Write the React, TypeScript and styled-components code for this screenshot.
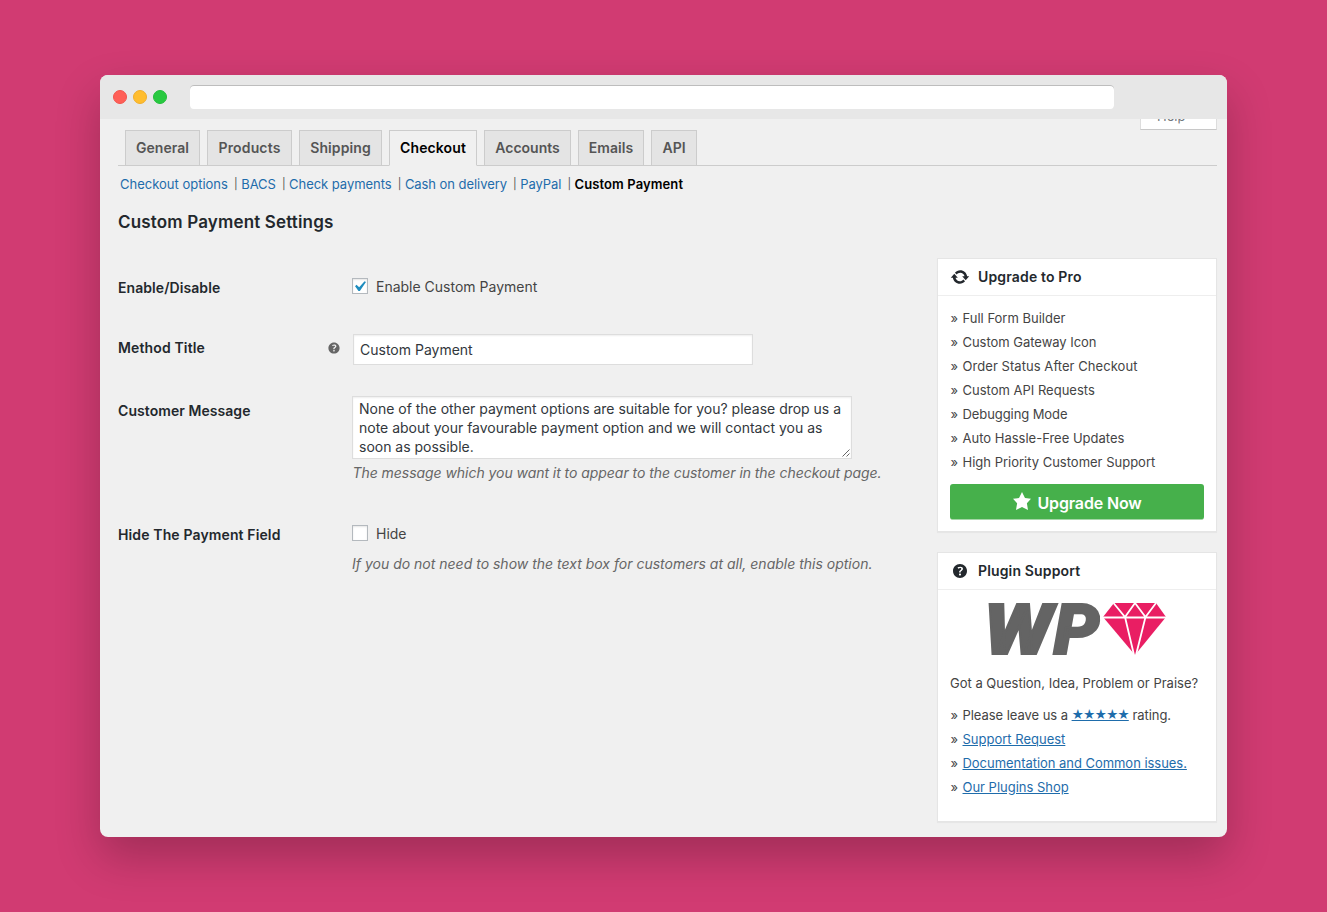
import React from "react";
import styled, { createGlobalStyle } from "styled-components";

const GlobalStyle = createGlobalStyle`
  * { box-sizing: border-box; }
  body {
    margin: 0;
    background: #d13b72;
    color: #444;
    font-family: Inter, "Open Sans", "Liberation Sans", sans-serif;
    font-size: 13px;
  }
  h2, h3, p, ul { margin: 0; padding: 0; font-weight: 400; }
`;

const Stage = styled.div`
  height: 912px;
  padding: 75px 100px;
  overflow: hidden;
`;

const Window = styled.div`
  width: 1127px;
  height: 762px;
  border-radius: 8px;
  background: #f0f0f0;
  overflow: hidden;
  box-shadow: 0 20px 45px rgba(0, 0, 0, 0.23);
`;

const TitleBar = styled.div`
  display: flex;
  align-items: center;
  height: 44px;
  padding-left: 13px;
  background: #e7e7e7;
`;

const Dot = styled.span<{ $fill: string; $ring: string }>`
  width: 14px;
  height: 14px;
  margin-right: 6px;
  border-radius: 50%;
  background: ${(p) => p.$fill};
  border: 1px solid ${(p) => p.$ring};
`;

const AddressBar = styled.div`
  width: 924px;
  height: 24px;
  margin-left: 17px;
  border-radius: 4px;
  background: #fff;
  box-shadow: inset 0 1px 0 #bdbdbd;
`;

const Page = styled.div`
  height: 718px;
  padding: 0 10px 0 18px;
  overflow: hidden;
`;

const ScreenMeta = styled.div`
  display: flex;
  justify-content: flex-end;
  align-items: flex-end;
  height: 11px;
  overflow: hidden;
`;

const HelpButton = styled.div`
  flex: none;
  width: 77px;
  height: 28px;
  padding: 2px 0 0 16px;
  line-height: 22px;
  color: #72777c;
  background: #fff;
  border: 1px solid #ddd;
  border-bottom-color: #c8c8c8;
`;

const Tabs = styled.nav`
  display: flex;
  gap: 7px;
  height: 36px;
  padding-left: 7px;
  box-shadow: inset 0 -1px 0 #ccc;
`;

const Tab = styled.a<{ $width: number; $active?: boolean; $spacing?: number }>`
  width: ${(p) => p.$width}px;
  border: 1px solid #ccc;
  border-bottom-color: ${(p) => (p.$active ? "#f0f0f0" : "#ccc")};
  background: ${(p) => (p.$active ? "#f0f0f0" : "#e4e4e4")};
  color: ${(p) => (p.$active ? "#000" : "#555")};
  font-size: 14px;
  font-weight: 600;
  line-height: 34px;
  letter-spacing: ${(p) => p.$spacing ?? 0}px;
  text-align: center;
  white-space: nowrap;
`;

const SubNav = styled.nav`
  display: flex;
  padding: 7px 0 1px 2px;
  line-height: 22px;
  white-space: nowrap;
`;

const SubLink = styled.a<{ $current?: boolean; $spacing?: number }>`
  color: ${(p) => (p.$current ? "#000" : "#1e6cab")};
  font-weight: ${(p) => (p.$current ? 600 : 400)};
  letter-spacing: ${(p) => p.$spacing ?? 0}px;
`;

const Divider = styled.span`
  width: 4px;
  margin: 0 3.3px 0 6px;
  display: flex;
  justify-content: center;
  color: #555;
  font-size: 11px;
`;

const PageTitle = styled.h2`
  height: 62px;
  padding-top: 14px;
  color: #23282d;
  font-size: 17px;
  font-weight: 600;
  line-height: 24px;
  letter-spacing: 0.16px;
`;

const Columns = styled.div`
  display: flex;
  justify-content: space-between;
  align-items: flex-start;
`;

const FormRow = styled.div<{ $height: number }>`
  display: grid;
  grid-template-columns: 210px 24px 560px;
  height: ${(p) => p.$height}px;
`;

const Label = styled.label<{ $spacing: number }>`
  padding-top: 20px;
  color: #23282d;
  font-size: 14px;
  font-weight: 600;
  line-height: 20px;
  letter-spacing: ${(p) => p.$spacing}px;
  white-space: nowrap;
`;

const Tip = styled.span`
  padding-top: 21.5px;
  svg { display: block; margin-left: -2px; fill: #666; }
`;

const Field = styled.div<{ $top: number }>`
  padding-top: ${(p) => p.$top}px;
`;

const CheckLine = styled.label`
  display: flex;
  align-items: center;
  gap: 8px;
  height: 18px;
  font-size: 14px;
  line-height: 18px;
`;

const Checkbox = styled.span`
  width: 16px;
  height: 16px;
  margin-top: -2px;
  background: #fff;
  border: 1px solid #b4b9be;
  box-shadow: inset 0 1px 2px rgba(0, 0, 0, 0.1);
  svg { display: block; margin: -3px 0 0 -4px; fill: #1e8cbe; }
`;

const TextInput = styled.div`
  width: 400px;
  height: 31px;
  margin-left: 1px;
  padding-left: 6px;
  background: #fff;
  border: 1px solid #ddd;
  box-shadow: inset 0 1px 2px rgba(0, 0, 0, 0.07);
  color: #32373c;
  font-size: 14px;
  line-height: 30px;
`;

const TextArea = styled.div`
  display: flex;
  width: 500px;
  height: 63px;
  padding: 2px 1px 1px 6px;
  background: #fff;
  border: 1px solid #ddd;
  box-shadow: inset 0 1px 2px rgba(0, 0, 0, 0.07);
  color: #32373c;
  font-size: 14px;
  line-height: 19px;
  white-space: pre;
  svg { flex: none; align-self: flex-end; margin-left: -9px; }
`;

const Message = styled.div`
  flex: 1;
  letter-spacing: -0.01px;
`;

const Description = styled.p<{ $top: number; $left?: number; $spacing?: number }>`
  padding: ${(p) => p.$top}px 0 0 ${(p) => p.$left ?? 0}px;
  color: #666;
  font-size: 14px;
  font-style: italic;
  line-height: 20px;
  letter-spacing: ${(p) => p.$spacing ?? 0}px;
  white-space: nowrap;
`;

const Sidebar = styled.aside`
  display: grid;
  gap: 20px;
  width: 280px;
`;

const Card = styled.section<{ $height: number }>`
  height: ${(p) => p.$height}px;
  background: #fff;
  border: 1px solid #e5e5e5;
  box-shadow: 0 1px 1px rgba(0, 0, 0, 0.04);
`;

const CardHeader = styled.h3`
  display: flex;
  align-items: flex-start;
  gap: 8px;
  height: 37px;
  padding: 8px 0 0 12px;
  border-bottom: 1px solid #eee;
  color: #23282d;
  font-size: 14px;
  font-weight: 600;
  line-height: 20px;
  letter-spacing: 0.15px;
  svg { fill: #23282d; }
`;

const CardBody = styled.div<{ $top: number }>`
  padding: ${(p) => p.$top}px 12px 0;
`;

const List = styled.ul`
  list-style: none;
`;

const Item = styled.li<{ $spacing?: number }>`
  display: flex;
  padding-left: 0.5px;
  line-height: 24px;
  letter-spacing: ${(p) => p.$spacing ?? 0}px;
  white-space: pre;
  &::before { content: "»"; width: 12px; letter-spacing: 0; }
`;

const Link = styled.a`
  color: #1e6cab;
  text-decoration: underline;
`;

const Stars = styled(Link)`
  font-size: 12px;
  letter-spacing: -1.1px;
`;

const UpgradeButton = styled.a`
  display: flex;
  justify-content: center;
  height: 36px;
  margin-top: 10px;
  padding-top: 3px;
  border-radius: 3px;
  background: #46b04b;
  border-bottom: 1px solid #a5d6a7;
  color: #fff;
  font-size: 16px;
  font-weight: 600;
  line-height: 32px;
  letter-spacing: -0.15px;
  svg { margin: 4px 5px 0 0; fill: #fff; }
`;

const Logo = styled.svg`
  display: block;
  margin-left: 36px;
  overflow: visible;
`;

const Question = styled.p`
  margin: 15px 0 8px;
  line-height: 24px;
  white-space: nowrap;
`;

const HELP =
  "M17 10c0-3.87-3.14-7-7-7-3.87 0-7 3.13-7 7s3.13 7 7 7c3.86 0 7-3.13 7-7zm-6.3 1.48H9.14v-.43c0-.38.08-.7.24-.98s.46-.57.88-.89c.41-.29.68-.53.81-.71.14-.18.2-.39.2-.62 0-.25-.09-.44-.28-.58-.19-.13-.45-.19-.79-.19-.58 0-1.25.19-2 .57l-.64-1.28c.87-.49 1.8-.74 2.77-.74.81 0 1.45.2 1.92.58.48.39.71.91.71 1.55 0 .43-.09.8-.29 1.11-.19.32-.57.67-1.11 1.06-.38.28-.61.49-.71.63-.1.15-.15.34-.15.57v.35zm-1.47 2.74c-.18-.17-.27-.42-.27-.73 0-.33.08-.58.26-.75s.43-.25.77-.25c.32 0 .57.09.75.26s.27.42.27.74c0 .3-.09.55-.27.72-.18.18-.43.27-.75.27-.33 0-.58-.09-.76-.26z";
const UPDATE =
  "M10.2 3.28c3.53 0 6.43 2.61 6.92 6h2.08l-3.5 4-3.5-4h2.32c-.45-1.97-2.21-3.45-4.32-3.45-1.45 0-2.73.71-3.54 1.78L4.95 5.66C6.23 4.2 8.11 3.28 10.2 3.28zm-.4 13.44c-3.52 0-6.43-2.61-6.92-6H.8l3.5-4c1.17 1.33 2.33 2.67 3.5 4H5.48c.45 1.97 2.21 3.45 4.32 3.45 1.45 0 2.73-.71 3.54-1.78l1.71 1.95c-1.28 1.46-3.15 2.38-5.25 2.38z";
const STAR = "M10 1l3 6 6 .75-4.12 4.62L16 19l-6-3-6 3 1.13-6.63L1 7.75 7 7z";
const CHECK = "M14.83 4.89l1.34.94-5.81 8.38H9.02L5.78 9.67l1.34-1.25 2.57 2.4z";

const Icon = ({ d, size = 20 }: { d: string; size?: number }) => (
  <svg width={size} height={size} viewBox="0 0 20 20" overflow="visible">
    <path d={d} />
  </svg>
);

const tabs = [
  { name: "General", width: 75, spacing: 0.04 },
  { name: "Products", width: 85, spacing: 0.15 },
  { name: "Shipping", width: 83, spacing: 0.09 },
  { name: "Checkout", width: 88, spacing: 0.12, active: true },
  { name: "Accounts", width: 87 },
  { name: "Emails", width: 66, spacing: 0.06 },
  { name: "API", width: 46 },
];

const sections = [
  { name: "Checkout options" },
  { name: "BACS", spacing: -0.09 },
  { name: "Check payments", spacing: -0.04 },
  { name: "Cash on delivery", spacing: -0.06 },
  { name: "PayPal", spacing: -0.09 },
  { name: "Custom Payment", spacing: 0.1, current: true },
];

const features = [
  { name: "Full Form Builder" },
  { name: "Custom Gateway Icon", spacing: -0.03 },
  { name: "Order Status After Checkout", spacing: 0.056 },
  { name: "Custom API Requests" },
  { name: "Debugging Mode", spacing: -0.08 },
  { name: "Auto Hassle-Free Updates" },
  { name: "High Priority Customer Support" },
];

export default function App() {
  return (
    <Stage>
      <GlobalStyle />
      <Window>
        <TitleBar>
          <Dot $fill="#ff5f57" $ring="#f2544d" />
          <Dot $fill="#ffbd2e" $ring="#f0ae2b" />
          <Dot $fill="#28c940" $ring="#22bd3a" />
          <AddressBar />
        </TitleBar>
        <Page>
          <ScreenMeta>
            <HelpButton>Help</HelpButton>
          </ScreenMeta>
          <Tabs>
            {tabs.map((t) => (
              <Tab key={t.name} $width={t.width} $active={t.active} $spacing={t.spacing}>
                {t.name}
              </Tab>
            ))}
          </Tabs>
          <SubNav>
            {sections.map((s, i) => (
              <React.Fragment key={s.name}>
                {i > 0 && <Divider>|</Divider>}
                <SubLink $current={s.current} $spacing={s.spacing}>
                  {s.name}
                </SubLink>
              </React.Fragment>
            ))}
          </SubNav>
          <PageTitle>Custom Payment Settings</PageTitle>
          <Columns>
            <form>
              <FormRow $height={60}>
                <Label $spacing={0.07}>Enable/Disable</Label>
                <span />
                <Field $top={20}>
                  <CheckLine>
                    <Checkbox>
                      <Icon d={CHECK} size={21} />
                    </Checkbox>
                    Enable Custom Payment
                  </CheckLine>
                </Field>
              </FormRow>
              <FormRow $height={63}>
                <Label $spacing={0.138}>Method Title</Label>
                <Tip>
                  <Icon d={HELP} size={16} />
                </Tip>
                <Field $top={16}>
                  <TextInput>Custom Payment</TextInput>
                </Field>
              </FormRow>
              <FormRow $height={124}>
                <Label $spacing={0.061}>Customer Message</Label>
                <span />
                <Field $top={15}>
                  <TextArea>
                    <Message>
                      {"None of the other payment options are suitable for you? please drop us a\nnote about your favourable payment option and we will contact you as\nsoon as possible."}
                    </Message>
                    <svg width="9" height="9" viewBox="0 0 9 9" stroke="#666" fill="none">
                      <path d="M1.500 8.500L8.500 1.500M5.500 8.500L8.500 5.500" />
                    </svg>
                  </TextArea>
                  <Description $top={4} $left={0.5} $spacing={-0.053}>
                    The message which you want it to appear to the customer in the checkout page.
                  </Description>
                </Field>
              </FormRow>
              <FormRow $height={90}>
                <Label $spacing={0.127}>Hide The Payment Field</Label>
                <span />
                <Field $top={20}>
                  <CheckLine>
                    <Checkbox />
                    Hide
                  </CheckLine>
                  <Description $top={11}>
                    If you do not need to show the text box for customers at all, enable this option.
                  </Description>
                </Field>
              </FormRow>
            </form>
            <Sidebar>
              <Card $height={274}>
                <CardHeader>
                  <Icon d={UPDATE} />
                  Upgrade to Pro
                </CardHeader>
                <CardBody $top={10}>
                  <List>
                    {features.map((f) => (
                      <Item key={f.name} $spacing={f.spacing}>
                        {f.name}
                      </Item>
                    ))}
                  </List>
                  <UpgradeButton>
                    <Icon d={STAR} />
                    Upgrade Now
                  </UpgradeButton>
                </CardBody>
              </Card>
              <Card $height={270}>
                <CardHeader>
                  <Icon d={HELP} />
                  Plugin Support
                </CardHeader>
                <CardBody $top={12}>
                  <Logo width="182" height="54" viewBox="0 0 182 54">
                    <g
                      fill="#646464"
                      stroke="#646464"
                      strokeWidth="2"
                      fontFamily="Roboto, sans-serif"
                      fontSize="70.5"
                      fontWeight="900"
                      fontStyle="italic"
                    >
                      <text x="-2.500" y="52" textLength="69" lengthAdjust="spacingAndGlyphs">W</text>
                      <text x="67.500" y="52" textLength="46" lengthAdjust="spacingAndGlyphs">P</text>
                    </g>
                    <path d="M117 15L128 1H170L180 15L149 53Z" fill="#e91e63" />
                    <path
                      d="M116 15.5H181M127.500 1L139 15L149 1L159.500 15L170 1M139 15L148 53M159.500 15L150 53"
                      stroke="#fff"
                      strokeWidth="1.8"
                      fill="none"
                    />
                  </Logo>
                  <Question>Got a Question, Idea, Problem or Praise?</Question>
                  <List>
                    <Item $spacing={-0.05}>
                      {"Please leave us a "}
                      <Stars>★★★★★</Stars>
                      {" rating."}
                    </Item>
                    <Item>
                      <Link>Support Request</Link>
                    </Item>
                    <Item $spacing={-0.04}>
                      <Link>Documentation and Common issues.</Link>
                    </Item>
                    <Item $spacing={-0.02}>
                      <Link>Our Plugins Shop</Link>
                    </Item>
                  </List>
                </CardBody>
              </Card>
            </Sidebar>
          </Columns>
        </Page>
      </Window>
    </Stage>
  );
}
